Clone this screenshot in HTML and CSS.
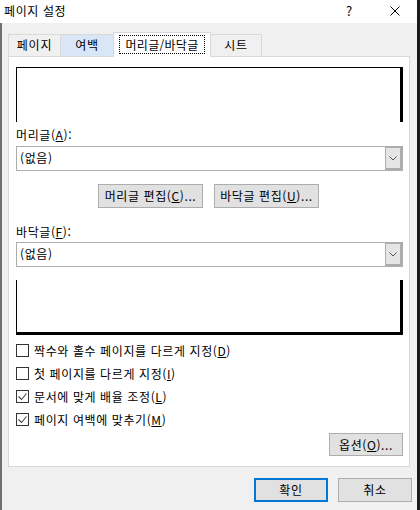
FILE: index.html
```html
<!DOCTYPE html>
<html lang="ko">
<head>
<meta charset="utf-8">
<title>페이지 설정</title>
<link rel="stylesheet" href="styles.css">
</head>
<body>
<div class="window">
  <div class="titlebar">
    <span class="title">페이지 설정</span>
    <span class="tb-btn help">?</span>
    <span class="tb-btn close">
      <svg width="10" height="10" viewBox="0 0 10 10"><path d="M0.5 0.5 L9.5 9.5 M9.5 0.5 L0.5 9.5" stroke="#000" stroke-width="1" fill="none"/></svg>
    </span>
  </div>
  <div class="content">
    <div class="tabs">
      <div class="tab t1">페이지</div>
      <div class="tab t2 hover">여백</div>
      <div class="tab t3 selected"><span class="focus">머리글/바닥글</span></div>
      <div class="tab t4">시트</div>
    </div>
    <div class="panel">
      <div class="preview preview-top"></div>
      <div class="label label-header">머리글(<u>A</u>):</div>
      <div class="combo">
        <span class="combo-text">(없음)</span>
        <span class="combo-btn"><svg width="8" height="5" viewBox="0 0 8 5"><path d="M0.5 0.5 L4 4 L7.5 0.5" stroke="#555" stroke-width="1" fill="none"/></svg></span>
      </div>
      <div class="edit-row">
        <button class="btn edit-btn">머리글 편집(<u>C</u>)...</button>
        <button class="btn edit-btn">바닥글 편집(<u>U</u>)...</button>
      </div>
      <div class="label label-footer">바닥글(<u>F</u>):</div>
      <div class="combo">
        <span class="combo-text">(없음)</span>
        <span class="combo-btn"><svg width="8" height="5" viewBox="0 0 8 5"><path d="M0.5 0.5 L4 4 L7.5 0.5" stroke="#555" stroke-width="1" fill="none"/></svg></span>
      </div>
      <div class="preview preview-bottom"></div>
      <div class="checks">
        <div class="check-row"><span class="box"></span><span>짝수와 홀수 페이지를 다르게 지정(<u>D</u>)</span></div>
        <div class="check-row"><span class="box"></span><span>첫 페이지를 다르게 지정(<u>I</u>)</span></div>
        <div class="check-row"><span class="box"><svg width="11" height="11" viewBox="0 0 11 11"><path d="M1.5 5.5 L4.5 8.5 L9.5 2.5" stroke="#444" stroke-width="1.1" fill="none"/></svg></span><span>문서에 맞게 배율 조정(<u>L</u>)</span></div>
        <div class="check-row"><span class="box"><svg width="11" height="11" viewBox="0 0 11 11"><path d="M1.5 5.5 L4.5 8.5 L9.5 2.5" stroke="#444" stroke-width="1.1" fill="none"/></svg></span><span>페이지 여백에 맞추기(<u>M</u>)</span></div>
      </div>
      <div class="options-row">
        <button class="btn options-btn">옵션(<u>O</u>)...</button>
      </div>
    </div>
    <div class="footer">
      <button class="btn dlg-btn primary">확인</button>
      <button class="btn dlg-btn">취소</button>
    </div>
  </div>
</div>
</body>
</html>
```

FILE: styles.css
```css
* { box-sizing: border-box; }
html, body { margin: 0; padding: 0; }
body {
  width: 420px;
  height: 510px;
  overflow: hidden;
  font-family: "Noto Sans CJK KR", "Malgun Gothic", sans-serif;
  font-size: 12px;
  letter-spacing: 0.6px;
  color: #000;
  background: #f0f0f0;
}
u { text-decoration: underline; text-underline-offset: 1px; }

.window {
  width: 420px;
  height: 510px;
  background: #f0f0f0;
  border-right: 3px solid #1a1a1a;
  display: flex;
  flex-direction: column;
}

.titlebar {
  height: 23px;
  background: #fff;
  display: flex;
  align-items: center;
  padding-left: 4px;
  flex: none;
}
.title { line-height: 16px; margin-top: -2px; }
.tb-btn {
  width: 45px;
  height: 23px;
  display: flex;
  align-items: center;
  justify-content: center;
}
.help { margin-left: auto; font-size: 13px; margin-top: -2px; }
.close svg { margin-top: -2px; }

.content {
  flex: 1;
  border-left: 2px solid #707070;
  padding: 9px 6px 0 6px;
}

.tabs {
  display: flex;
  align-items: flex-end;
  height: 24px;
}
.tab {
  height: 22px;
  border-top: 1px solid #d9d9d9;
  border-left: 1px solid #d9d9d9;
  background: #f0f0f0;
  display: flex;
  align-items: center;
  justify-content: center;
  line-height: 16px;
  padding-bottom: 1px;
  letter-spacing: 0.8px;
}
.t1 { width: 52px; }
.t2 { width: 53px; }
.t3 { width: 98px; }
.t4 { width: 51px; border-right: 1px solid #d9d9d9; }
.tab.hover { background: #d8e6f5; }
.tab.selected {
  height: 25px;
  margin-bottom: -1px;
  background: #fff;
  border-right: 1px solid #d9d9d9;
  z-index: 1;
  padding-bottom: 2px;
  letter-spacing: 0.3px;
}
.tab.selected + .tab { border-left: none; }
.focus {
  border: 1px dotted #000;
  padding: 0 5px;
  line-height: 17px;
}

.panel {
  width: 402px;
  height: 411px;
  background: #fff;
  border: 1px solid #d9d9d9;
  padding: 10px 6px 10px 7px;
  display: flex;
  flex-direction: column;
}

.preview { height: 55px; flex: none; }
.preview-top {
  border-top: 1px solid #000;
  border-left: 1px solid #000;
  border-right: 3px solid #000;
}
.preview-bottom {
  margin-top: 13px;
  border-left: 1px solid #000;
  border-right: 3px solid #000;
  border-bottom: 3px solid #000;
}

.label { line-height: 16px; height: 16px; }
.label-header { margin-top: 5px; margin-bottom: 3px; }
.label-footer { margin-top: 16px; margin-bottom: 2px; }

.combo {
  height: 25px;
  border: 1px solid #adadad;
  display: flex;
  align-items: stretch;
  flex: none;
}
.combo-text {
  flex: 1;
  padding-left: 3px;
  line-height: 22px;
}
.combo-btn {
  width: 17px;
  background: #e5e5e5;
  border: 1px solid #adadad;
  border-right-width: 2px;
  border-bottom-width: 2px;
  display: flex;
  align-items: center;
  justify-content: center;
}

.btn {
  font-family: inherit;
  font-size: 12px;
  letter-spacing: 0.6px;
  color: #000;
  background: #e1e1e1;
  border: 1px solid #adadad;
  padding: 0;
  margin: 0;
  line-height: 16px;
}

.edit-row {
  margin-top: 13px;
  display: flex;
  justify-content: center;
  gap: 11px;
  padding-right: 2px;
}
.edit-btn { width: 105px; height: 24px; }

.checks {
  margin-top: 4px;
  display: flex;
  flex-direction: column;
}
.check-row {
  height: 23px;
  display: flex;
  align-items: center;
  gap: 5px;
  line-height: 16px;
}
.box {
  width: 13px;
  height: 13px;
  border: 1px solid #333;
  background: #fff;
  display: flex;
  align-items: center;
  justify-content: center;
  flex: none;
}

.options-row {
  margin-top: 2px;
  display: flex;
  justify-content: flex-end;
}
.options-btn { width: 74px; height: 23px; }

.footer {
  margin-top: 11px;
  display: flex;
  justify-content: flex-end;
  gap: 10px;
  margin-right: -1px;
}
.dlg-btn { width: 74px; height: 24px; }
.dlg-btn.primary { border: 2px solid #0078d7; }
```
